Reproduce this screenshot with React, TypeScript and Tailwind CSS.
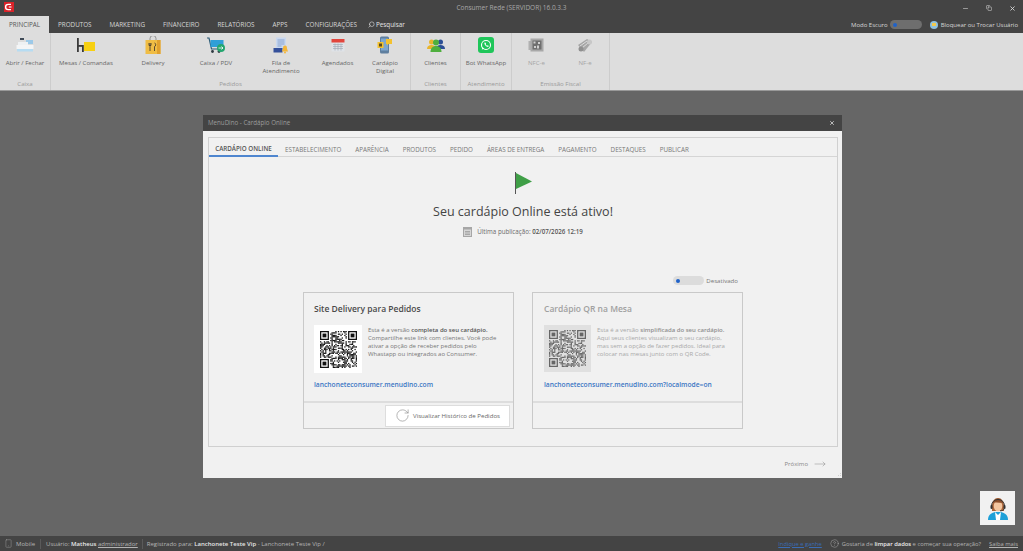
import React from 'react';
import { Search, Minus, X, Copy, Smartphone, RotateCw, MoveRight, CircleHelp } from 'lucide-react';

const font = { fontFamily: '"Open Sans", "Noto Sans", sans-serif' };

function Logo() {
  return (
    <svg width="10" height="10" viewBox="0 0 10 10">
      <rect width="10" height="10" fill="#d8232a" />
      <path d="M7 2.4H4.2a2.6 2.6 0 0 0 0 5.2H7" fill="none" stroke="#fff" strokeWidth="1.4" />
      <path d="M7.5 5H4.8" stroke="#fff" strokeWidth="1.1" />
    </svg>
  );
}

function CashIcon() {
  return (
    <svg width="18" height="16" viewBox="0 0 18 16">
      <rect x="4" y="1" width="4" height="2" fill="#3f4a57" />
      <rect x="10" y="3" width="7" height="4" fill="#9cc9e8" />
      <rect x="2" y="5" width="10" height="3" fill="#eef1f3" />
      <rect x="0.5" y="8" width="17" height="4" fill="#f4f5f6" />
      <rect x="1" y="12" width="16" height="2.5" fill="#b6dcf2" />
    </svg>
  );
}

function TableIcon() {
  return (
    <svg width="18" height="16" viewBox="0 0 18 16">
      <rect x="0" y="1" width="1.8" height="14" fill="#3a3a3a" />
      <rect x="0" y="8" width="6" height="1.8" fill="#3a3a3a" />
      <rect x="5" y="8" width="1.8" height="7" fill="#3a3a3a" />
      <rect x="7" y="5" width="11" height="9" fill="#f7d012" />
    </svg>
  );
}

function BagIcon() {
  return (
    <svg width="16" height="18" viewBox="0 0 16 18">
      <path d="M5 5V2.5a3 3 0 0 1 6 0V5" fill="none" stroke="#8b8b8b" strokeWidth="0.9" />
      <rect x="0.5" y="4" width="15" height="14" fill="#f0bd45" />
      <rect x="12" y="4" width="3.5" height="14" fill="#e0a02e" />
      <path d="M5 7v3.5M5 10.5V15M4 7v2.5h2V7M9.5 7c1.6 0 1.6 3.5 0 3.5V15" fill="none" stroke="#4b4030" strokeWidth="0.9" />
    </svg>
  );
}

function CartIcon() {
  return (
    <svg width="18" height="17" viewBox="0 0 18 17">
      <path d="M0 1h2l2.5 11h9" fill="none" stroke="#2f5d78" strokeWidth="1.2" />
      <rect x="3.5" y="3" width="13" height="7" fill="#2f9fd8" />
      <circle cx="5.5" cy="14.5" r="1.4" fill="#2f3a42" />
      <circle cx="12" cy="14.5" r="1.4" fill="#2f3a42" />
      <circle cx="14" cy="11" r="4" fill="#24a66f" />
      <path d="M11.5 11h4.5M14.5 9.5 16 11l-1.5 1.5" fill="none" stroke="#fff" strokeWidth="0.8" />
    </svg>
  );
}

function QueueIcon() {
  return (
    <svg width="16" height="17" viewBox="0 0 16 17">
      <rect x="3" y="0.5" width="10" height="11" fill="#c9d8ef" />
      <path d="M4.5 3h7M4.5 5h7M4.5 7h7M4.5 9h4" stroke="#6d8fc4" strokeWidth="0.7" />
      <rect x="0.5" y="11" width="9" height="4.5" fill="#34509a" />
      <path d="M12 8.5c-1.5 0-2 1.3-2 3L9 14.5h6l-1-3c0-1.7-.5-3-2-3z" fill="#f4b63a" />
      <circle cx="12" cy="15.5" r="1" fill="#f4b63a" />
    </svg>
  );
}

function CalendarIcon() {
  return (
    <svg width="14" height="14" viewBox="0 0 14 14">
      <rect x="0.5" y="1" width="13" height="12.5" fill="#dfe3e8" />
      <rect x="0.5" y="1" width="13" height="3.5" fill="#e2463d" />
      <path d="M2 6.5h10M2 8.5h10M2 10.5h10M4 5.5v7M7 5.5v7M10 5.5v7" stroke="#a5adb8" strokeWidth="0.7" />
    </svg>
  );
}

function PhoneMenuIcon() {
  return (
    <svg width="16" height="18" viewBox="0 0 16 18">
      <rect x="3" y="0.5" width="9" height="17" rx="1.5" fill="#5f7f9f" />
      <rect x="4" y="2.5" width="7" height="12" fill="#7fa7cf" />
      <rect x="0.5" y="6" width="6" height="6" fill="#f4c22f" />
      <rect x="2" y="7.5" width="3" height="3" fill="#5a4a20" />
      <path d="M9 3h6v5h-3.5L10 9.5V8H9z" fill="#f4c22f" />
    </svg>
  );
}

function PeopleIcon() {
  return (
    <svg width="18" height="15" viewBox="0 0 18 15">
      <circle cx="4.5" cy="4" r="2.5" fill="#e9b52c" />
      <path d="M0 11c0-3 2-4 4.5-4S9 8 9 11z" fill="#e9b52c" />
      <circle cx="13.5" cy="4" r="2.5" fill="#2b4f95" />
      <path d="M9 11c0-3 2-4 4.5-4S18 8 18 11z" fill="#2b4f95" />
      <circle cx="9" cy="4.5" r="3" fill="#4faf3e" />
      <path d="M3.5 14c0-4 2.5-6 5.5-6s5.500 2 5.500 6z" fill="#4faf3e" />
    </svg>
  );
}

function WhatsIcon() {
  return (
    <svg width="16" height="16" viewBox="0 0 16 16">
      <rect width="16" height="16" rx="3" fill="#1fc65a" />
      <circle cx="8" cy="8" r="4.5" fill="none" stroke="#fff" strokeWidth="1.1" />
      <path d="M3.8 12.5 4.6 10l1.6 1.8z" fill="#fff" />
      <path d="M6.3 5.8c0 2.2 1.6 3.9 3.8 4.2l.7-1-1.1-.7-.5.4c-.7-.3-1.2-.8-1.5-1.5l.4-.5-.7-1.1z" fill="#fff" />
    </svg>
  );
}

function NfceIcon() {
  return (
    <svg width="17" height="14" viewBox="0 0 17 14">
      <rect x="0.5" y="3" width="3" height="9" fill="#b0b0b0" />
      <rect x="2.5" y="0.5" width="13" height="13" fill="#a8a8a8" />
      <rect x="4.5" y="2.5" width="9" height="9" fill="#6f6f6f" />
      <path d="M5.5 3.5h2v2h-2zM10 4h2v2h-2zM6 8h2v2H6zM9 7.5h2v3H9z" fill="#cfcfcf" />
    </svg>
  );
}

function NfeIcon() {
  return (
    <svg width="16" height="15" viewBox="0 0 16 15">
      <path d="M1 7 10 1l5 3-8 10z" fill="#a6a6a6" />
      <path d="M3 8l7-5M5 10l6-5" stroke="#e2e2e2" strokeWidth="0.9" />
      <circle cx="12.5" cy="4" r="2.5" fill="#c8c8c8" />
      <circle cx="4" cy="11" r="2.5" fill="#8f8f8f" />
    </svg>
  );
}

function PublishedIcon() {
  return (
    <svg width="9" height="10" viewBox="0 0 9 10">
      <rect width="9" height="10" fill="#a6a6a6" />
      <rect x="1" y="2.5" width="7" height="6.5" fill="#d6d6d6" />
      <path d="M2 4.5h5M2 6h5M2 7.5h5" stroke="#8a8a8a" strokeWidth="0.6" />
    </svg>
  );
}

function ribbonItem(w: string, icon: React.ReactNode, label: React.ReactNode, muted?: boolean) {
  return { w, icon, label, muted };
}

const groups = [
  {
    title: 'Caixa',
    w: 'w-[51px]',
    items: [ribbonItem('w-[50px]', <CashIcon />, 'Abrir / Fechar')],
  },
  {
    title: 'Pedidos',
    w: 'w-[360px]',
    items: [
      ribbonItem('w-[70px]', <TableIcon />, 'Mesas / Comandas'),
      ribbonItem('w-[64px]', <BagIcon />, 'Delivery'),
      ribbonItem('w-[62px]', <CartIcon />, 'Caixa / PDV'),
      ribbonItem('w-[68px]', <QueueIcon />, <>Fila de<br />Atendimento</>),
      ribbonItem('w-[45px]', <CalendarIcon />, 'Agendados'),
      ribbonItem('w-[50px]', <PhoneMenuIcon />, <>Cardápio<br />Digital</>),
    ],
  },
  {
    title: 'Clientes',
    w: 'w-[50px]',
    items: [ribbonItem('w-[49px]', <PeopleIcon />, 'Clientes')],
  },
  {
    title: 'Atendimento',
    w: 'w-[51px]',
    items: [ribbonItem('w-[50px]', <WhatsIcon />, 'Bot WhatsApp')],
  },
  {
    title: 'Emissão Fiscal',
    w: 'w-[98px]',
    items: [
      ribbonItem('w-[49px]', <NfceIcon />, 'NFC-e', true),
      ribbonItem('w-[48px]', <NfeIcon />, 'NF-e', true),
    ],
  },
];

// fixed pseudo random pattern, looks like a QR code at this size
function QrCode({ size, color }: { size: number; color: string }) {
  const n = 29;
  const cells: React.ReactNode[] = [];
  let seed = 77;
  const inFinder = (x: number, y: number) =>
    (x < 8 && y < 8) || (x > n - 9 && y < 8) || (x < 8 && y > n - 9);
  for (let y = 0; y < n; y++) {
    for (let x = 0; x < n; x++) {
      seed = (seed * 1103515245 + 12345) & 0x7fffffff;
      if (!inFinder(x, y) && (seed >> 16) % 100 < 52) {
        cells.push(<rect key={`${x}-${y}`} x={x} y={y} width="1" height="1" />);
      }
    }
  }
  const finder = (x: number, y: number) => (
    <g key={`f${x}${y}`}>
      <path d={`M${x} ${y}h7v7h-7zM${x + 1} ${y + 1}v5h5v-5z`} fillRule="evenodd" />
      <rect x={x + 2} y={y + 2} width="3" height="3" />
    </g>
  );
  return (
    <svg width={size} height={size} viewBox={`0 0 ${n} ${n}`} fill={color}>
      {cells}
      {finder(0, 0)}
      {finder(n - 7, 0)}
      {finder(0, n - 7)}
    </svg>
  );
}

function AgentIcon() {
  return (
    <svg width="22" height="24" viewBox="0 0 22 24">
      <path d="M5 10c0-5 2.5-8 6-8s6 3 6 8v5H5z" fill="#a9653a" />
      <ellipse cx="11" cy="10" rx="4.3" ry="5.3" fill="#f3c6a0" />
      <path d="M6 7c1-3 3-4.5 5-4.5S15 4 16 7c-3 0-6-1-10 0z" fill="#8d4f2c" />
      <path d="M4.5 10a6.5 6.5 0 0 1 13 0" fill="none" stroke="#333" strokeWidth="1" />
      <rect x="3.5" y="9" width="2" height="4" rx="1" fill="#333" />
      <rect x="16.5" y="9" width="2" height="4" rx="1" fill="#333" />
      <path d="M17 13c-.5 1.5-2 1.8-4 1.8" fill="none" stroke="#333" strokeWidth="0.9" />
      <path d="M1 24c0-5 3-7 7-8h6c4 1 7 3 7 8z" fill="#1ea0d8" />
      <path d="M8 16l3 3 3-3-1 8H9z" fill="#fff" />
    </svg>
  );
}

export default function App() {
  const dialogTabs = ['ESTABELECIMENTO', 'APARÊNCIA', 'PRODUTOS', 'PEDIDO', 'ÁREAS DE ENTREGA', 'PAGAMENTO', 'DESTAQUES', 'PUBLICAR'];
  const topTabs = ['PRODUTOS', 'MARKETING', 'FINANCEIRO', 'RELATÓRIOS', 'APPS', 'CONFIGURAÇÕES'];

  return (
    <div className="flex flex-col h-[551px] w-[1023px] overflow-hidden bg-[#666666] text-[6.2px] leading-[8px]" style={font}>
      {/* title bar */}
      <div className="flex items-center h-4 bg-[#444444] text-[#a8a8a8] shrink-0">
        <div className="w-[300px] pl-1 pb-[2px] flex"><Logo /></div>
        <div className="flex-1 text-center text-[6.5px]">Consumer Rede (SERVIDOR) 16.0.3.3</div>
        <div className="w-[300px] flex justify-end items-center gap-[17px] pr-[7px] text-[#d8d8d8]">
          <Minus size={7} />
          <Copy size={6} />
          <X size={7} strokeWidth={3} />
        </div>
      </div>

      {/* menu tabs */}
      <div className="flex items-center h-[17px] bg-[#444444] text-[#d6d6d6] text-[6.3px] shrink-0">
        <div className="flex items-center justify-center w-[49px] h-full bg-[#dddddd] text-[#555555]">PRINCIPAL</div>
        <div className="flex items-center gap-[18px] pl-[9px]">
          {topTabs.map((t) => (
            <span key={t}>{t}</span>
          ))}
        </div>
        <div className="flex items-center gap-[1px] ml-[11px] text-[#e4e4e4]">
          <Search size={7} className="-scale-x-100" />
          <span>Pesquisar</span>
        </div>
        <div className="flex items-center ml-auto pr-[5px] text-[6px] text-[#d6d6d6]">
          <span>Modo Escuro</span>
          <span className="flex items-center w-8 h-[9px] ml-[2px] pl-[3px] rounded-full bg-[#6e6e6e]">
            <span className="w-1 h-1 rounded-full bg-[#1f62c9]" />
          </span>
          <span className="w-2 h-2 ml-2 mr-[3px] rounded-full bg-[#8fc1de] flex items-center justify-center">
            <span className="w-1 h-[3px] bg-[#f2c84b]" />
          </span>
          <span>Bloquear ou Trocar Usuário</span>
        </div>
      </div>

      {/* ribbon */}
      <div className="flex h-[58px] bg-[#dddddd] border-b border-[#999999] shrink-0">
        {groups.map((g) => (
          <div key={g.title} className={`${g.w} flex flex-col justify-between border-r border-[#cccccc] pb-[2px]`}>
            <div className="flex">
              {g.items.map((item, i) => (
                <div key={i} className={`${item.w} flex flex-col items-center text-center ${item.muted ? 'text-[#a5a5a5]' : 'text-[#666666]'}`}>
                  <div className="flex items-center justify-center h-[20px] mt-[2px]">{item.icon}</div>
                  <div className="mt-[4px] leading-[8px] whitespace-nowrap text-[6.1px]">{item.label}</div>
                </div>
              ))}
            </div>
            <div className="text-center text-[#9a9a9a] text-[6.1px]">{g.title}</div>
          </div>
        ))}
      </div>

      {/* workspace */}
      <div className="relative flex-1 min-h-0 pl-[203px] pt-6">
        <div className="relative flex flex-col w-[639px] h-[363px] bg-[#f1f1f1]">
          <div className="flex items-center justify-between h-4 px-[5px] bg-[#444444] text-[#9c9c9c] text-[6.2px] shrink-0">
            <span>MenuDino - Cardápio Online</span>
            <X size={6} strokeWidth={3} className="text-[#e0e0e0] mr-[2px]" />
          </div>

          <div className="flex flex-col h-[310px] ml-[5px] mr-1 mt-[6px] border border-[#d0d0d0] shrink-0">
            <div className="flex h-[19px] border-b border-[#d5d5d5] text-[#777777] text-[6.25px] shrink-0">
              <div className="flex items-center justify-center w-[69px] h-[19px] pt-[5px] font-semibold text-[#555555] border-b-2 border-[#4f86cf]">
                CARDÁPIO ONLINE
              </div>
              <div className="flex items-center gap-[14px] pl-[7px] pt-[5px]">
                {dialogTabs.map((t) => (
                  <span key={t}>{t}</span>
                ))}
              </div>
            </div>

            <div className="flex flex-col flex-1 items-center">
              <svg className="mt-[15px]" width="17" height="22" viewBox="0 0 17 22">
                <path d="M.5 0v22" stroke="#555555" strokeWidth="1" />
                <path d="M1 1l16 8.5L1 17z" fill="#3f9f47" />
              </svg>
              <h1 className="mt-[10px] text-[12.5px] leading-4 font-medium text-[#444444]">Seu cardápio Online está ativo!</h1>
              <div className="flex items-center mt-[7px] text-[#6a6a6a] text-[6.2px]">
                <span className="mr-[5px] flex"><PublishedIcon /></span>
                <span>Última publicação: <b className="font-semibold text-[#555555]">02/07/2026 12:19</b></span>
              </div>

              <div className="flex items-center self-end mt-[39px] mr-[99px]">
                <span className="flex items-center w-[31px] h-[9px] pl-[3px] rounded-full bg-[#dcdcdc]">
                  <span className="w-1 h-1 rounded-full bg-[#1f62c9]" />
                </span>
                <span className="ml-[2px] text-[#777777] text-[6.1px]">Desativado</span>
              </div>

              <div className="flex gap-[18px] mt-[7px]">
                {/* active card */}
                <div className="flex flex-col w-[211px] h-[137px] border border-[#c9c9c9]">
                  <div className="flex flex-col flex-1 pl-[10px] pt-[10px]">
                    <h2 className="text-[8.5px] leading-3 font-semibold text-[#4a4a4a]">Site Delivery para Pedidos</h2>
                    <div className="flex mt-[10px]">
                      <div className="flex items-center justify-center w-12 h-12 bg-white shrink-0">
                        <QrCode size={37} color="#111111" />
                      </div>
                      <p className="ml-[6px] w-[132px] mt-[1px] text-[#777777] text-[6px] leading-[8px]">
                        Esta é a versão <b className="font-semibold text-[#555555]">completa do seu cardápio.</b> Compartilhe este link com clientes. Você pode ativar a opção de receber pedidos pelo Whastapp ou integrados ao Consumer.
                      </p>
                    </div>
                    <a className="mt-[8px] text-[6.7px] font-semibold text-[#3b76c4]">lanchoneteconsumer.menudino.com</a>
                  </div>
                  <div className="flex items-center justify-end h-[27px] border-t-2 border-[#dddddd] pr-[3px] shrink-0">
                    <div className="flex items-center w-[125px] h-[22px] pl-[9px] bg-white border border-[#dddddd] text-[#666666] text-[6.1px]">
                      <RotateCw size={15} strokeWidth={1} className="text-[#888888] mr-[3px]" />
                      <span>Visualizar Histórico de Pedidos</span>
                    </div>
                  </div>
                </div>

                {/* disabled card */}
                <div className="flex flex-col w-[211px] h-[137px] border border-[#c9c9c9]">
                  <div className="flex flex-col flex-1 pl-[11px] pt-[10px]">
                    <h2 className="text-[8.5px] leading-3 font-semibold text-[#a0a0a0]">Cardápio QR na Mesa</h2>
                    <div className="flex mt-[10px]">
                      <div className="flex items-center justify-center w-[47px] h-[47px] bg-[#e0e0e0] shrink-0">
                        <QrCode size={37} color="#666666" />
                      </div>
                      <p className="ml-[6px] w-[135px] mt-[1px] text-[#a8a8a8] text-[6px] leading-[8px]">
                        Esta é a versão <b className="font-semibold text-[#8f8f8f]">simplificada do seu cardápio.</b> Aqui seus clientes visualizam o seu cardápio, mas sem a opção de fazer pedidos. Ideal para colocar nas mesas junto com o QR Code.
                      </p>
                    </div>
                    <a className="mt-[9px] text-[6.7px] font-semibold text-[#3b76c4]">lanchoneteconsumer.menudino.com?localmode=on</a>
                  </div>
                  <div className="h-[27px] border-t-2 border-[#dddddd] shrink-0" />
                </div>
              </div>
            </div>
          </div>

          <div className="flex flex-1 items-center justify-end pr-4 pt-[2px] text-[6px] text-[#888888]">
            <span>Próximo</span>
            <MoveRight size={12} strokeWidth={1} className="ml-[6px]" />
          </div>

          {/* resize grip */}
          <svg className="absolute right-0 bottom-0" width="5" height="5" viewBox="0 0 5 5" fill="#d0d0d0">
            <rect x="3" y="0" width="1" height="1" />
            <rect x="1" y="2" width="1" height="1" />
            <rect x="3" y="2" width="1" height="1" />
          </svg>
        </div>

        {/* floating help button */}
        <div className="absolute right-2 bottom-[11px] flex items-center justify-center w-[35px] h-[34px] bg-[#f1f1f1]">
          <AgentIcon />
        </div>
      </div>

      {/* status bar */}
      <div className="flex items-center h-[15px] bg-[#444444] text-[#b4b4b4] text-[6px] shrink-0">
        <Smartphone size={9} strokeWidth={1} className="ml-[4px] mr-[3px]" />
        <span>Mobile</span>
        <span className="w-px h-[10px] bg-[#5a5a5a] mx-[5px]" />
        <span>Usuário: <b className="font-semibold text-[#e6e6e6]">Matheus</b> <span className="underline">administrador</span></span>
        <span className="w-px h-[10px] bg-[#5a5a5a] mx-[4px]" />
        <span>Registrado para: <b className="font-semibold text-[#e6e6e6]">Lanchonete Teste Vip</b> - Lanchonete Teste Vip /</span>
        <div className="flex items-center ml-auto pr-[5px] text-[5.8px]">
          <span className="text-[#3a6cb5] underline">Indique e ganhe</span>
          <CircleHelp size={9} strokeWidth={1} className="ml-2 mr-[3px] text-[#cccccc]" />
          <span>Gostaria de <b className="font-semibold text-[#eeeeee]">limpar dados</b> e começar sua operação?</span>
          <span className="ml-2 underline">Saiba mais</span>
        </div>
      </div>
    </div>
  );
}
